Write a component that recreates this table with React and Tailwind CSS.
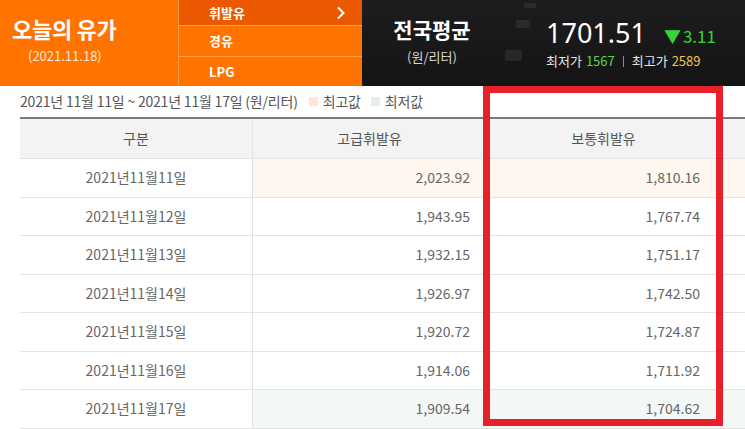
const rows = [
  { date: '2021년11월11일', premium: '2,023.92', regular: '1,810.16', tone: 'max' },
  { date: '2021년11월12일', premium: '1,943.95', regular: '1,767.74' },
  { date: '2021년11월13일', premium: '1,932.15', regular: '1,751.17' },
  { date: '2021년11월14일', premium: '1,926.97', regular: '1,742.50' },
  { date: '2021년11월15일', premium: '1,920.72', regular: '1,724.87' },
  { date: '2021년11월16일', premium: '1,914.06', regular: '1,711.92' },
  { date: '2021년11월17일', premium: '1,909.54', regular: '1,704.62', tone: 'min' },
];

const font = { fontFamily: '"Noto Sans CJK KR", "Noto Sans", sans-serif' };

function TopBar() {
  return (
    <div className="flex h-[86px]">
      {/* 오늘의 유가 */}
      <div className="w-[178px] bg-[#ff7300] flex flex-col items-start pl-[12px] pt-[11px]">
        <div className="text-white text-[22px] font-bold leading-[35px] tracking-[-0.3px]">오늘의 유가</div>
        <div className="text-[#ffe6d2] text-[13px] leading-[18px] ml-[16px] mt-[1px]">(2021.11.18)</div>
      </div>

      {/* fuel menu */}
      <div className="w-[184px] flex flex-col border-l border-[#ff9c4a] text-white text-[13px] font-bold">
        <div className="h-[26px] bg-[#ea5800] flex items-center justify-between pl-[30px] pr-[16px] border-b border-[#ff9c4a]">
          <span>휘발유</span>
          <svg width="10" height="14" viewBox="0 0 10 14" fill="none" stroke="#fff" strokeWidth="2">
            <path d="M2 1.5 L7.5 7 L2 12.5" />
          </svg>
        </div>
        <div className="h-[31px] bg-[#ff7300] flex items-center pl-[30px] border-b border-[#ff9c4a]">경유</div>
        <div className="flex-1 bg-[#ff7300] flex items-center pl-[30px]">LPG</div>
      </div>

      {/* 전국평균 */}
      <div className="relative flex-1 bg-gradient-to-b from-[#1d1d1f] to-[#141415] flex overflow-hidden">
        <div className="absolute left-[162px] top-[3px] w-[12px] h-[5px] rounded-[2px] bg-white/[0.07] blur-[0.5px]" />
        <div className="absolute left-[154px] top-[20px] w-[14px] h-[8px] rounded-[2px] bg-white/[0.07] blur-[0.5px]" />
        <div className="absolute left-[143px] top-[50px] w-[17px] h-[11px] rounded-[2px] bg-white/[0.07] blur-[0.5px]" />
        <div className="w-[140px] flex flex-col items-center pt-[13px]">
          <div className="text-white text-[21px] font-bold leading-[33px]">전국평균</div>
          <div className="text-[#d8d8d8] text-[13px] leading-[18px] mt-[2px]">(원/리터)</div>
        </div>
        <div className="flex flex-col pl-[44px] pt-[15px]">
          <div className="flex items-baseline">
            <span className="text-white text-[27px] leading-[36px]" style={{ fontFamily: '"Noto Sans", sans-serif' }}>1701.51</span>
            <span className="text-[#38d438] text-[17px] font-bold ml-[18px]">▼</span>
            <span className="text-[#38d438] text-[17px] ml-[2px]">3.11</span>
          </div>
          <div className="flex items-center text-[13px] leading-[18px] text-[#e6e6e6] mt-[1px]">
            <span>최저가</span>
            <span className="text-[#5bd64a] ml-[4px]">1567</span>
            <span className="w-px h-[11px] bg-[#8a8a8a] mx-[8px]" />
            <span>최고가</span>
            <span className="text-[#f4c24a] ml-[4px]">2589</span>
          </div>
        </div>
      </div>
    </div>
  );
}

function Cell({ children, className = '' }) {
  return <div className={`h-[38.5px] flex items-center border-b border-[#e3e3e3] ${className}`}>{children}</div>;
}

export default function App() {
  return (
    <div className="relative w-[745px] h-[429px] bg-white overflow-hidden" style={font}>
      <TopBar />

      <div className="flex items-center h-[31px] pl-[20px] text-[14px] text-[#555] tracking-[-0.2px]">
        <span>2021년 11월 11일 ~ 2021년 11월 17일 (원/리터)</span>
        <span className="w-[9px] h-[9px] bg-[#fde6d6] ml-[11px] mr-[5px]" />
        <span>최고값</span>
        <span className="w-[9px] h-[9px] bg-[#e3eef0] ml-[10px] mr-[5px]" />
        <span>최저값</span>
      </div>

      <div className="ml-[20px] border-t-2 border-[#7a7a7a] text-[14px] text-[#666]">
        <div className="grid grid-cols-[232px_234px_234px_100px] bg-[#f3f3f3] h-[40px] border-b border-[#e3e3e3] text-[#555]">
          <div className="flex items-center justify-center">구분</div>
          <div className="flex items-center justify-center border-l border-[#e3e3e3]">고급휘발유</div>
          <div className="flex items-center justify-center border-l border-[#e3e3e3]">보통휘발유</div>
          <div className="border-l border-[#e3e3e3]" />
        </div>
        {rows.map((r) => {
          const bg = r.tone === 'max' ? 'bg-[#fff6ef]' : r.tone === 'min' ? 'bg-[#f4f8f5]' : 'bg-white';
          return (
            <div key={r.date} className="grid grid-cols-[232px_234px_234px_100px]">
              <Cell className="justify-center">{r.date}</Cell>
              <Cell className={`justify-end pr-[16px] border-l border-[#e3e3e3] ${bg}`}>{r.premium}</Cell>
              <Cell className={`justify-end pr-[20px] border-l border-[#e3e3e3] ${bg}`}>{r.regular}</Cell>
              <Cell className={`border-l border-[#e3e3e3] ${bg}`} />
            </div>
          );
        })}
      </div>

      {/* highlight annotation */}
      <div className="absolute left-[483px] top-[86px] w-[240px] h-[340px] border-[7px] border-[#e8202a] pointer-events-none" />
    </div>
  );
}
